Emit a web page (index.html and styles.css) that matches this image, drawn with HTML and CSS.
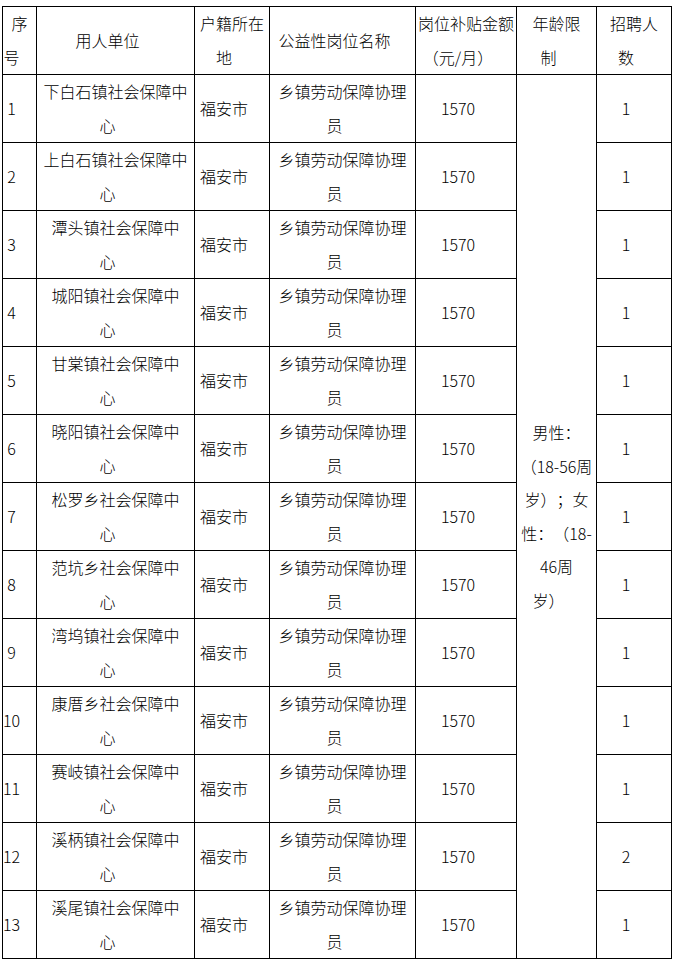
FILE: index.html
```html
<!DOCTYPE html>
<html lang="zh-CN">
<head>
<meta charset="utf-8">
<title>公益性岗位</title>
<link rel="stylesheet" href="styles.css">
</head>
<body>
<div class="tbl">
  <div class="c"><p>序<span class="e">号</span></p></div>
  <div class="c"><p>用人单<span class="e">位</span></p></div>
  <div class="c"><p>户籍所在<span class="e">地</span></p></div>
  <div class="c"><p>公益性岗位名<span class="e">称</span></p></div>
  <div class="c"><p>岗位补贴金额（元/月<span class="e">）</span></p></div>
  <div class="c"><p>年龄限<span class="e">制</span></p></div>
  <div class="c"><p>招聘人<span class="e">数</span></p></div>

  <div class="c age"><p>男性：（18-56周岁）；女性：（18-46周岁<span class="e">）</span></p></div>

  <div class="c"><p><span class="e">1</span></p></div>
  <div class="c"><p>下白石镇社会保障中<span class="e">心</span></p></div>
  <div class="c"><p>福安<span class="e">市</span></p></div>
  <div class="c"><p>乡镇劳动保障协理<span class="e">员</span></p></div>
  <div class="c"><p>157<span class="e">0</span></p></div>
  <div class="c"><p><span class="e">1</span></p></div>

  <div class="c"><p><span class="e">2</span></p></div>
  <div class="c"><p>上白石镇社会保障中<span class="e">心</span></p></div>
  <div class="c"><p>福安<span class="e">市</span></p></div>
  <div class="c"><p>乡镇劳动保障协理<span class="e">员</span></p></div>
  <div class="c"><p>157<span class="e">0</span></p></div>
  <div class="c"><p><span class="e">1</span></p></div>

  <div class="c"><p><span class="e">3</span></p></div>
  <div class="c"><p>潭头镇社会保障中<span class="e">心</span></p></div>
  <div class="c"><p>福安<span class="e">市</span></p></div>
  <div class="c"><p>乡镇劳动保障协理<span class="e">员</span></p></div>
  <div class="c"><p>157<span class="e">0</span></p></div>
  <div class="c"><p><span class="e">1</span></p></div>

  <div class="c"><p><span class="e">4</span></p></div>
  <div class="c"><p>城阳镇社会保障中<span class="e">心</span></p></div>
  <div class="c"><p>福安<span class="e">市</span></p></div>
  <div class="c"><p>乡镇劳动保障协理<span class="e">员</span></p></div>
  <div class="c"><p>157<span class="e">0</span></p></div>
  <div class="c"><p><span class="e">1</span></p></div>

  <div class="c"><p><span class="e">5</span></p></div>
  <div class="c"><p>甘棠镇社会保障中<span class="e">心</span></p></div>
  <div class="c"><p>福安<span class="e">市</span></p></div>
  <div class="c"><p>乡镇劳动保障协理<span class="e">员</span></p></div>
  <div class="c"><p>157<span class="e">0</span></p></div>
  <div class="c"><p><span class="e">1</span></p></div>

  <div class="c"><p><span class="e">6</span></p></div>
  <div class="c"><p>晓阳镇社会保障中<span class="e">心</span></p></div>
  <div class="c"><p>福安<span class="e">市</span></p></div>
  <div class="c"><p>乡镇劳动保障协理<span class="e">员</span></p></div>
  <div class="c"><p>157<span class="e">0</span></p></div>
  <div class="c"><p><span class="e">1</span></p></div>

  <div class="c"><p><span class="e">7</span></p></div>
  <div class="c"><p>松罗乡社会保障中<span class="e">心</span></p></div>
  <div class="c"><p>福安<span class="e">市</span></p></div>
  <div class="c"><p>乡镇劳动保障协理<span class="e">员</span></p></div>
  <div class="c"><p>157<span class="e">0</span></p></div>
  <div class="c"><p><span class="e">1</span></p></div>

  <div class="c"><p><span class="e">8</span></p></div>
  <div class="c"><p>范坑乡社会保障中<span class="e">心</span></p></div>
  <div class="c"><p>福安<span class="e">市</span></p></div>
  <div class="c"><p>乡镇劳动保障协理<span class="e">员</span></p></div>
  <div class="c"><p>157<span class="e">0</span></p></div>
  <div class="c"><p><span class="e">1</span></p></div>

  <div class="c"><p><span class="e">9</span></p></div>
  <div class="c"><p>湾坞镇社会保障中<span class="e">心</span></p></div>
  <div class="c"><p>福安<span class="e">市</span></p></div>
  <div class="c"><p>乡镇劳动保障协理<span class="e">员</span></p></div>
  <div class="c"><p>157<span class="e">0</span></p></div>
  <div class="c"><p><span class="e">1</span></p></div>

  <div class="c"><p>1<span class="e">0</span></p></div>
  <div class="c"><p>康厝乡社会保障中<span class="e">心</span></p></div>
  <div class="c"><p>福安<span class="e">市</span></p></div>
  <div class="c"><p>乡镇劳动保障协理<span class="e">员</span></p></div>
  <div class="c"><p>157<span class="e">0</span></p></div>
  <div class="c"><p><span class="e">1</span></p></div>

  <div class="c"><p>1<span class="e">1</span></p></div>
  <div class="c"><p>赛岐镇社会保障中<span class="e">心</span></p></div>
  <div class="c"><p>福安<span class="e">市</span></p></div>
  <div class="c"><p>乡镇劳动保障协理<span class="e">员</span></p></div>
  <div class="c"><p>157<span class="e">0</span></p></div>
  <div class="c"><p><span class="e">1</span></p></div>

  <div class="c"><p>1<span class="e">2</span></p></div>
  <div class="c"><p>溪柄镇社会保障中<span class="e">心</span></p></div>
  <div class="c"><p>福安<span class="e">市</span></p></div>
  <div class="c"><p>乡镇劳动保障协理<span class="e">员</span></p></div>
  <div class="c"><p>157<span class="e">0</span></p></div>
  <div class="c"><p><span class="e">2</span></p></div>

  <div class="c"><p>1<span class="e">3</span></p></div>
  <div class="c"><p>溪尾镇社会保障中<span class="e">心</span></p></div>
  <div class="c"><p>福安<span class="e">市</span></p></div>
  <div class="c"><p>乡镇劳动保障协理<span class="e">员</span></p></div>
  <div class="c"><p>157<span class="e">0</span></p></div>
  <div class="c"><p><span class="e">1</span></p></div>
</div>
</body>
</html>
```

FILE: styles.css
```css
html, body {
  background: #fff;
}
body {
  margin: 6px 0 0 2px;
  font-family: "Noto Sans CJK SC", "Noto Sans", sans-serif;
  font-size: 16px;
  font-weight: 300;
  color: #000;
  text-spacing-trim: space-all;
}
.tbl {
  display: grid;
  width: 670px;
  box-sizing: border-box;
  grid-template-columns: 33px 157px 74px 145px 100px 79px 74px;
  grid-auto-rows: 67px;
  gap: 1px;
  padding: 1px;
  background: #000;
}
.c {
  background: #fff;
  display: flex;
  flex-direction: column;
  justify-content: center;
  min-width: 0;
}
.c p {
  margin: 0;
  text-align: center;
  line-height: 33.5px;
}
.age {
  grid-column: 6;
  grid-row: 2 / span 13;
}
.e {
  padding-right: 16px;
}
```
